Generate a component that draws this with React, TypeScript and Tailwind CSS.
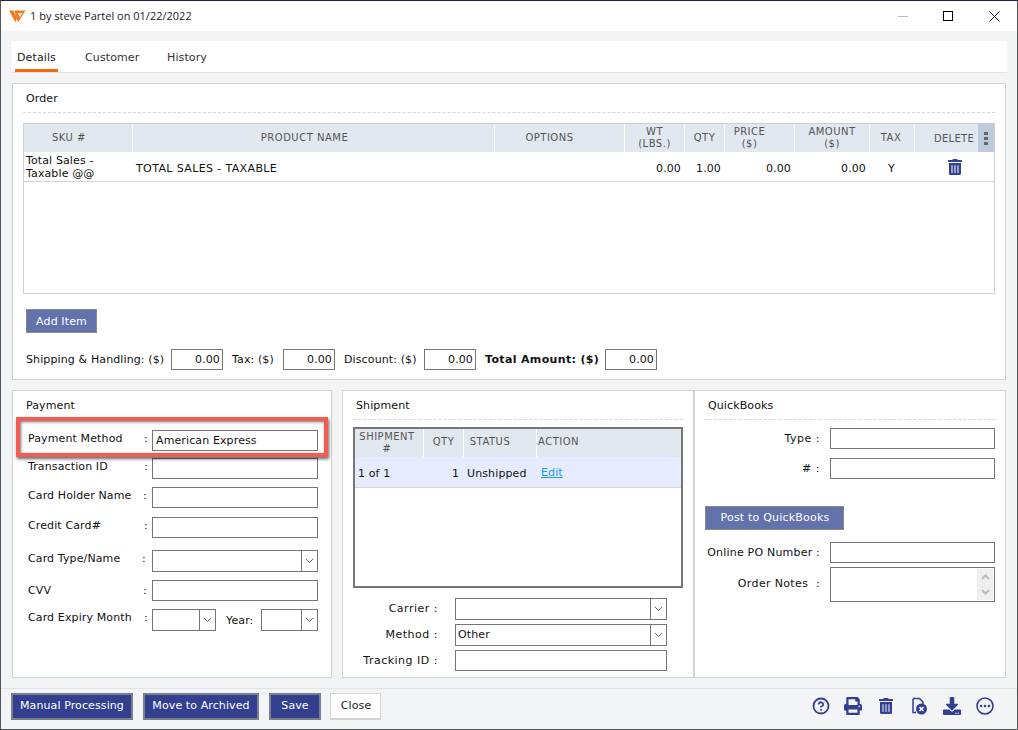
import { FaTrashAlt, FaPrint, FaDownload } from "react-icons/fa";
import { FiHelpCircle } from "react-icons/fi";
import type { ReactNode } from "react";

const box = "border border-[#767676] bg-white";
const ui = "font-['DejaVu_Sans',sans-serif] text-[11px] tracking-[0.12px] text-[#111]";

function Chevron() {
  return (
    <svg width="9" height="6" viewBox="0 0 9 6" fill="none" stroke="#666" strokeWidth="1">
      <path d="M1 1l3.5 3.5L8 1" />
    </svg>
  );
}

function Input({ w, value }: { w: number; value?: string }) {
  return (
    <div className={`${box} flex h-[21px] items-center px-[3px] pt-[1px]`} style={{ width: w }}>
      {value}
    </div>
  );
}

function Select({ w, value }: { w: number; value?: string }) {
  return (
    <div className={`${box} flex h-[22px] items-center`} style={{ width: w }}>
      <span className="flex-1 px-[2px]">{value}</span>
      <span className="flex h-full w-[16px] items-center justify-center border-l border-[#767676]">
        <Chevron />
      </span>
    </div>
  );
}

function PanelTitle({ children }: { children: ReactNode }) {
  return (
    <div className="h-[22px] border-b border-dashed border-[#d5d5d5] pl-[3px] pt-[1px] leading-[14px]">
      {children}
    </div>
  );
}

function PayRow({ label, mt, up = 0, colon = 131, children }: { label: string; mt: number; up?: number; colon?: number; children: ReactNode }) {
  return (
    <div className="flex" style={{ marginTop: mt }}>
      <div className="relative w-[139px]" style={{ top: up }}>
        <span className="whitespace-nowrap pl-[15px] leading-[21px]">{label}</span>
        <span className="absolute top-0 leading-[21px]" style={{ left: colon }}>:</span>
      </div>
      {children}
    </div>
  );
}

function SideRow({ label, lw, mt, pr, tight, children }: { label: string; lw: number; mt: number; pr: number; tight?: boolean; children: ReactNode }) {
  return (
    <div className="flex" style={{ marginTop: mt }}>
      <div
        className={`whitespace-nowrap text-right leading-[21px] ${tight ? "tracking-[0.2px]" : "tracking-[0.5px]"}`}
        style={{ width: lw, paddingRight: pr }}
      >
        {label}
      </div>
      {children}
    </div>
  );
}

function Th({ w, pr = 0, pb = 0, children }: { w: number; pr?: number; pb?: number; children: ReactNode }) {
  return (
    <div
      className="flex shrink-0 items-center justify-center border-r border-white text-center text-[10px] leading-[12px] tracking-[0.5px] text-[#555]"
      style={{ width: w, paddingRight: pr, paddingBottom: pb }}
    >
      <span>{children}</span>
    </div>
  );
}

function Td({ w, right, children }: { w: number; right?: boolean; children?: ReactNode }) {
  return (
    <div
      className={`flex shrink-0 items-center ${right ? "justify-end pr-[4px] pt-[3px]" : ""}`}
      style={{ width: w }}
    >
      {children}
    </div>
  );
}

function DarkBtn({ w, children }: { w: number; children: ReactNode }) {
  return (
    <button className="h-[27px] border-2 border-[#7a7f8c] bg-[#333f8f] tracking-[0.1px] text-white" style={{ width: w }}>
      {children}
    </button>
  );
}

function Money({ value }: { value: string }) {
  return (
    <div className={`${box} flex h-[21px] w-[52px] shrink-0 items-center justify-end pr-[2px] pt-[1px]`}>
      {value}
    </div>
  );
}

export default function App() {
  return (
    <div className={`${ui} relative flex h-[730px] w-[1018px] flex-col overflow-hidden border-x border-b border-t border-x-[#555] border-b-[#555] border-t-[#1b2440] bg-[#f3f4f6]`}>
      {/* title bar */}
      <div className="flex h-[30px] shrink-0 items-center bg-white pl-[8px]">
        <svg width="17" height="13" viewBox="0 0 17 13">
          <path d="M0 .5h4.500L8 8 6.500 12.500z" fill="#f47a20" />
          <path fillRule="evenodd" d="M5.500.5H16.500L9 12.500zM8.500 3l2.500 4 2.500-4z" fill="#f47a20" />
          <path d="M9.300 3.600h3.400L11 6.300z" fill="#fbd9a8" />
        </svg>
        <span className="ml-[4px] font-['Open_Sans',sans-serif] text-[11px] tracking-[0px] text-[#222]">1 by steve Partel on 01/22/2022</span>
        <div className="ml-auto flex items-center pr-[17px]">
          <span className="mr-[35px] h-px w-[10px] bg-[#bbb]" />
          <span className="mr-[36px] h-[10px] w-[10px] border border-black" />
          <svg width="11" height="11" viewBox="0 0 11 11" stroke="#111" strokeWidth="1">
            <path d="M.5.5l10 10M10.500.5l-10 10" />
          </svg>
        </div>
      </div>

      {/* tabs */}
      <div className="mx-[10px] mt-[10px] flex h-[32px] shrink-0 items-end gap-[27px] border-b border-[#e3e3e3] bg-white pl-[4px] text-[#333]">
        <div className="h-[31px] w-[43px] border-b-[3px] border-[#f26a0f] pl-[2px] pt-[9px] text-[#222]">Details</div>
        <div className="h-[31px] w-[55px] pt-[9px]">Customer</div>
        <div className="h-[31px] pt-[9px]">History</div>
      </div>

      <div className="mx-[11px] mt-[10px] flex flex-1 flex-col">
        {/* order */}
        <section className="h-[297px] border border-[#d3d3d3] bg-white px-[10px] pt-[7px]">
          <PanelTitle>Order</PanelTitle>
          <div className="mt-[10px] h-[171px] border border-[#cfcfcf]">
            <div className="relative flex h-[28px] bg-[#e2e8ef]">
              <Th w={109} pr={18}>SKU #</Th>
              <Th w={362} pr={18}>PRODUCT NAME</Th>
              <Th w={130} pr={20}>OPTIONS</Th>
              <Th w={60}>WT<br />(LBS.)</Th>
              <Th w={40}>QTY</Th>
              <Th w={70} pr={20}>PRICE<br />($)</Th>
              <Th w={75}>AMOUNT<br />($)</Th>
              <Th w={45} pr={2}>TAX</Th>
              <div className="flex flex-1 items-center pl-[19px] text-[10px] tracking-[0.3px] text-[#555]">DELETE</div>
              <div className="absolute right-0 top-0 flex h-full w-[16px] flex-col items-center justify-center gap-[2px] bg-[#bcccdc]">
                <span className="h-[3px] w-[4px] bg-[#666]" />
                <span className="h-[3px] w-[4px] bg-[#666]" />
                <span className="h-[3px] w-[4px] bg-[#666]" />
              </div>
            </div>
            <div className="flex h-[30px] border-b border-[#d5d5d5] leading-[13px]">
              <Td w={109}><span className="pl-[2px]">Total Sales -<br />Taxable @@</span></Td>
              <Td w={362}><span className="pl-[3px] pt-[3px] tracking-[0.38px]">TOTAL SALES - TAXABLE</span></Td>
              <Td w={130} />
              <Td w={60} right>0.00</Td>
              <Td w={40} right>1.00</Td>
              <Td w={70} right>0.00</Td>
              <Td w={75} right>0.00</Td>
              <Td w={45}><span className="pl-[18px] pt-[3px]">Y</span></Td>
              <div className="flex flex-1 items-center pl-[32px] pt-[1px]">
                <FaTrashAlt className="text-[#333f8f]" size={16} />
              </div>
            </div>
          </div>
          <button className="ml-[3px] mt-[15px] block h-[24px] w-[71px] border border-[#8a8a8a] bg-[#6272ab] pt-[2px] text-white">Add Item</button>
          <div className="mt-[16px] flex items-center pl-[3px]">
            <span className="w-[145px] pt-[1px]">Shipping &amp; Handling: ($)</span>
            <Money value="0.00" />
            <span className="ml-[9px] w-[51px] pt-[1px]">Tax: ($)</span>
            <Money value="0.00" />
            <span className="ml-[9px] w-[80px] pt-[1px]">Discount: ($)</span>
            <Money value="0.00" />
            <span className="ml-[9px] w-[120px] whitespace-nowrap pt-[1px] font-bold tracking-[0.35px]">Total Amount: ($)</span>
            <Money value="0.00" />
          </div>
        </section>

        <div className="mt-[10px] flex h-[288px]">
          {/* payment */}
          <section className="w-[320px] border border-[#d3d3d3] bg-white pt-[7px]">
            <div className="mx-[10px]"><PanelTitle>Payment</PanelTitle></div>
            <PayRow label="Payment Method" mt={10} up={-2}><Input w={166} value="American Express" /></PayRow>
            <PayRow label="Transaction ID" mt={7} up={-2}><Input w={166} /></PayRow>
            <PayRow label="Card Holder Name" mt={8} up={-2} colon={130}><Input w={166} /></PayRow>
            <PayRow label="Credit Card#" mt={9} up={-2}><Input w={166} /></PayRow>
            <PayRow label="Card Type/Name" mt={12} up={-2} colon={129}><Select w={166} /></PayRow>
            <PayRow label="CVV" mt={8} colon={130}><Input w={166} /></PayRow>
            <PayRow label="Card Expiry Month" mt={8} up={-2}>
              <Select w={64} />
              <span className="ml-[10px] w-[35px] leading-[23px]">Year:</span>
              <Select w={57} />
            </PayRow>
          </section>

          {/* shipment */}
          <section className="ml-[10px] w-[353px] border-y border-l border-r-[2px] border-[#d3d3d3] bg-white px-[10px] pt-[7px]">
            <PanelTitle>Shipment</PanelTitle>
            <div className="mt-[7px] h-[161px] border-2 border-[#767676]">
              <div className="flex h-[28px] bg-[#e2e8ef]">
                <Th w={69} pr={4}>SHIPMENT<br />#</Th>
                <Th w={40} pb={2}>QTY</Th>
                <Th w={73} pr={20} pb={2}>STATUS</Th>
                <div className="flex flex-1 items-center overflow-hidden pb-[4px] pl-[1px] text-[10px] tracking-[0.5px] text-[#555]">ACTION</div>
              </div>
              <div className="flex h-[31px] items-center border-b border-[#d5d5d5] bg-[#e6ecfd] pt-[4px]">
                <span className="w-[97px] pl-[3px]">1 of 1</span>
                <span className="w-[10px]">1</span>
                <span className="ml-[5px] w-[74px]">Unshipped</span>
                <span className="-mt-[2px] text-[#1a9df0] underline">Edit</span>
              </div>
            </div>
            <SideRow label="Carrier :" lw={102} mt={10} pr={17}><Select w={212} /></SideRow>
            <SideRow label="Method :" lw={102} mt={4} pr={17}><Select w={212} value="Other" /></SideRow>
            <SideRow label="Tracking ID :" lw={102} mt={4} pr={17}><Input w={212} /></SideRow>
          </section>

          {/* quickbooks */}
          <section className="w-[311px] border-y border-r border-[#d3d3d3] bg-white px-[9px] pt-[7px]">
            <PanelTitle><span className="ml-px">QuickBooks</span></PanelTitle>
            <SideRow label="Type :" lw={126} mt={8} pr={10}><Input w={165} /></SideRow>
            <SideRow label="# :" lw={126} mt={9} pr={10}><Input w={165} /></SideRow>
            <button className="ml-[1px] mt-[27px] block h-[24px] w-[139px] border border-[#8a8a8a] bg-[#6272ab] pl-[1px] tracking-[0.2px] text-white">Post to QuickBooks</button>
            <SideRow label="Online PO Number :" lw={126} mt={12} pr={10} tight><Input w={165} /></SideRow>
            <div className="mt-[4px] flex">
              <div className="w-[126px] whitespace-pre pr-[10px] pt-[6px] text-right leading-[21px] tracking-[0.35px]">{"Order Notes  :"}</div>
              <div className="flex h-[35px] w-[165px] justify-end border border-[#767676] p-px">
                <div className="flex w-[16px] flex-col items-center justify-around bg-[#efefef]">
                  <svg width="9" height="6" viewBox="0 0 9 6" fill="none" stroke="#bbb" strokeWidth="2"><path d="M1 5l3.500-3.500L8 5" /></svg>
                  <svg width="9" height="6" viewBox="0 0 9 6" fill="none" stroke="#bbb" strokeWidth="2"><path d="M1 1l3.500 3.500L8 1" /></svg>
                </div>
              </div>
            </div>
          </section>
        </div>
      </div>

      {/* footer */}
      <div className="flex h-[41px] shrink-0 items-center border-t border-[#e3e3e3] pl-[10px] pb-[6px]">
        <DarkBtn w={122}>Manual Processing</DarkBtn>
        <span className="ml-[10px]"><DarkBtn w={116}>Move to Archived</DarkBtn></span>
        <span className="ml-[10px]"><DarkBtn w={52}>Save</DarkBtn></span>
        <button className="ml-[9px] h-[27px] w-[51px] border border-b-2 border-[#d3d3d3] bg-white pl-[1px] pt-[1px] text-[#222]">Close</button>
        <div className="ml-auto flex items-center pr-[23px] text-[#333f8f]">
          <FiHelpCircle size={18} strokeWidth={2.4} />
          <FaPrint className="ml-[14px]" size={18} />
          <FaTrashAlt className="ml-[16px]" size={16} />
          <svg className="ml-[17px]" width="17" height="18" viewBox="0 0 17 18">
            <path d="M2 1.500h6.500L12 5v3M2 1.500V15.500h3" fill="none" stroke="#333f8f" strokeWidth="1.500" />
            <circle cx="10.500" cy="12" r="5.500" fill="#333f8f" />
            <path d="M8.500 10l4 4M12.500 10l-4 4" stroke="#fff" strokeWidth="1.600" />
          </svg>
          <FaDownload className="ml-[15px]" size={18} />
          <svg className="ml-[15px]" width="18" height="18" viewBox="0 0 18 18">
            <circle cx="9" cy="9" r="8" fill="none" stroke="#333f8f" strokeWidth="1.600" />
            <circle cx="5" cy="9" r="1.300" fill="#333f8f" />
            <circle cx="9" cy="9" r="1.300" fill="#333f8f" />
            <circle cx="13" cy="9" r="1.300" fill="#333f8f" />
          </svg>
        </div>
      </div>

      {/* callout drawn over the payment form */}
      <div className="pointer-events-none absolute left-[15px] top-[416px] h-[40px] w-[312px] border-[4px] border-[#f25c54] shadow-[1px_2px_3px_rgba(0,0,0,0.6),inset_1px_1px_3px_rgba(0,0,0,0.55)]" />
    </div>
  );
}
